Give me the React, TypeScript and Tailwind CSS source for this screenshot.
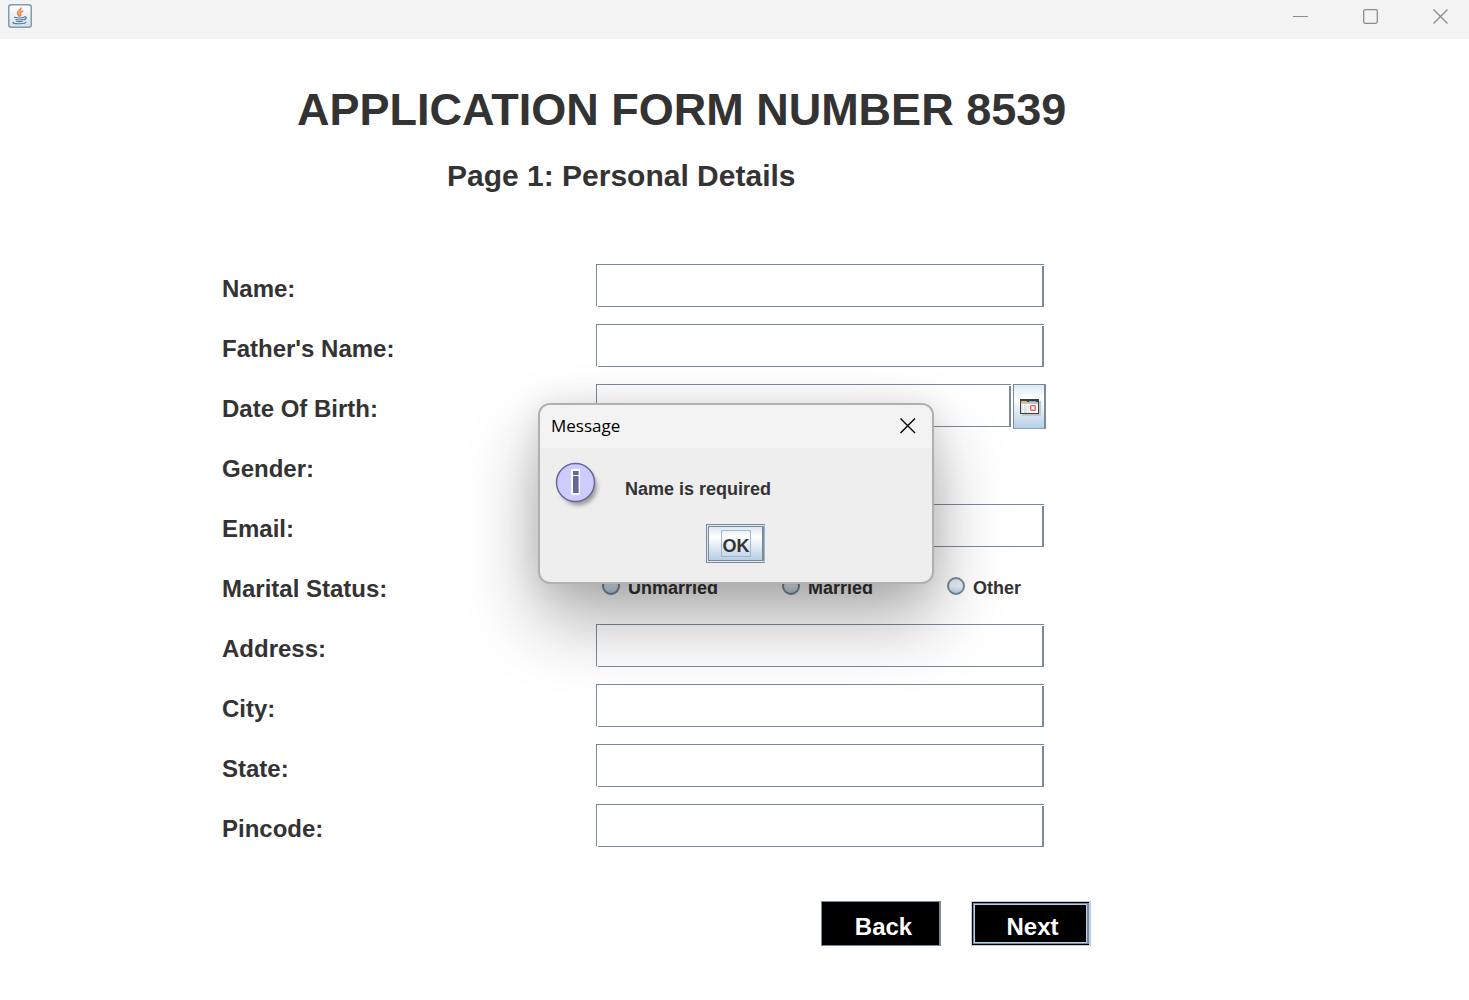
import type { ReactNode } from "react";

function JavaIcon() {
  return (
    <svg width="24" height="24" viewBox="0 0 24 24" aria-hidden="true">
      <defs>
        <linearGradient id="tile" x1="0" y1="0" x2="0" y2="1">
          <stop offset="0" stopColor="#ffffff" />
          <stop offset="1" stopColor="#d9e0e6" />
        </linearGradient>
      </defs>
      <rect x="0.75" y="0.75" width="22.5" height="22.5" rx="2.5" fill="url(#tile)" stroke="#7d9db4" strokeWidth="1.5" />
      <path d="M12.800 4.200c.8 2-3.600 3-3.300 5 .1 1 1.300 1.700 1.700 2.700M14.600 7.200c-2 .8-3 1.600-2.200 2.800.5.8.4 1.300-.2 1.900" fill="none" stroke="#e8823a" strokeWidth="1.700" strokeLinecap="round" />
      <path d="M6.500 13.200c3 .9 7 .9 9.500.1M7.700 15.300c2.300.8 5.400.8 7.300 0M8.500 17.200c2 .6 4 .6 6 0M16.500 12.900c2.500-.5 2.400 2.200-.6 2.900" fill="none" stroke="#4f7fa3" strokeWidth="1.200" strokeLinecap="round" />
      <path d="M5.500 18.200c-2 .9 1.500 1.700 6 1.600 3.500 0 6.500-.7 6.500-1.700" fill="none" stroke="#4f7fa3" strokeWidth="1.100" strokeLinecap="round" />
    </svg>
  );
}

function InfoIcon() {
  return (
    <svg width="48" height="48" viewBox="0 0 48 48" aria-hidden="true">
      <defs>
        <filter id="soft" x="-20%" y="-20%" width="150%" height="150%">
          <feGaussianBlur stdDeviation="2" />
        </filter>
      </defs>
      <circle cx="23.500" cy="25" r="18.500" fill="#000000" opacity="0.35" filter="url(#soft)" />
      <circle cx="20.500" cy="20.500" r="19" fill="#ccccff" stroke="#666699" strokeWidth="1.500" />
      <path d="M16 7h9v26h-9z" fill="#ffffff" />
      <path d="M18 9h6v4h-6zM18 14h6v17h-6z" fill="#666699" />
      <path d="M23 9h1v4h-1zM23 14h1v17h-1z" fill="#9999cc" />
    </svg>
  );
}

function CalendarIcon() {
  return (
    <svg width="21" height="17" viewBox="0 0 21 17" shapeRendering="crispEdges" aria-hidden="true">
      <path d="M2 2h19v15H2z" fill="#c3c6ca" />
      <path d="M0 0h19v15H0z" fill="#3d403c" />
      <path d="M1 2h6v1H1z" fill="#f0b040" />
      <path d="M9 2h7v1H9z" fill="#7fa6c8" />
      <path d="M1 3h17v2H1z" fill="#c4c4c4" />
      <path d="M1 5h17v9H1z" fill="#ffffff" />
      <path d="M1 6h2v8H1zM4 6h3v8H4zM8 6h1v8H8z" fill="#e3e3e3" />
      <path d="M10 6h6v6h-6z" fill="#f7b4b6" />
      <path d="M11 6h4v1h-4zM11 11h4v1h-4zM10 7h1v4h-1zM15 7h1v4h-1z" fill="#ee5c60" />
      <path d="M12 8h2v2h-2z" fill="#ffffff" />
    </svg>
  );
}

function TextField({ id, type = "text" }: { id: string; type?: string }) {
  return (
    <div className="relative min-w-0 flex-1 before:absolute before:bottom-0 before:left-0 before:h-px before:w-0.5 before:bg-[#eeeeee] after:absolute after:top-px after:right-0 after:h-px after:w-0.5 after:bg-white">
      <input
        id={id}
        type={type}
        className="block h-[43px] w-full rounded-none border border-r-2 border-[#7a8a99] bg-white px-2 text-lg outline-none"
      />
    </div>
  );
}

function Row({ label, htmlFor, children }: { label: string; htmlFor?: string; children?: ReactNode }) {
  const text = "pt-[11px] text-2xl leading-7 font-bold";
  return (
    <div className="grid h-[60px] grid-cols-[374px_minmax(0,450px)]">
      {htmlFor ? (
        <label htmlFor={htmlFor} className={text}>
          {label}
        </label>
      ) : (
        <span className={text}>{label}</span>
      )}
      <div className="flex items-start">{children}</div>
    </div>
  );
}

function Radio({ label, className }: { label: string; className: string }) {
  return (
    <label className={`flex items-start gap-2 text-lg leading-[22px] font-bold ${className}`}>
      <input
        type="radio"
        name="marital"
        className="size-[18px] appearance-none rounded-full border-2 border-[#7a8a99] bg-linear-to-b from-[#dde8f3] via-[#e9f0f6] to-[#b8cfe5]"
      />
      {label}
    </label>
  );
}

export default function App() {
  return (
    <div className="relative min-h-screen overflow-hidden bg-white font-['Liberation_Sans',Arial,sans-serif] text-[#333333]">
      <header className="flex h-[39px] items-start justify-between bg-[#f3f3f3] pt-1 pr-5 pl-2">
        <JavaIcon />
        <div className="flex gap-[54px] pt-1 text-[#8c8c8c]">
          <button type="button" aria-label="Minimize" className="size-4">
            <svg width="16" height="16" viewBox="0 0 16 16" stroke="currentColor">
              <path d="M0 8.500h15" />
            </svg>
          </button>
          <button type="button" aria-label="Maximize" className="size-4">
            <svg width="16" height="16" viewBox="0 0 16 16" fill="none" stroke="currentColor" strokeWidth="1.300">
              <rect x="0.700" y="1.700" width="13.600" height="13.600" rx="1.500" />
            </svg>
          </button>
          <button type="button" aria-label="Close" className="size-4">
            <svg width="16" height="16" viewBox="0 0 16 16" stroke="currentColor" strokeWidth="1.300">
              <path d="M0.500 1.500l14 14M14.500 1.500l-14 14" />
            </svg>
          </button>
        </div>
      </header>

      <main className="pl-[222px]">
        <h1 className="pt-[45px] pl-[75px] text-[45px] leading-[52px] font-bold whitespace-nowrap">
          APPLICATION FORM NUMBER 8539
        </h1>
        <h2 className="pt-[22px] pl-[225px] text-3xl leading-9 font-bold whitespace-nowrap">Page 1: Personal Details</h2>

        <form className="pt-[70px]">
          <div className="pr-[423px]">
            <Row label="Name:" htmlFor="name">
              <div className="flex flex-1 pr-0.5">
                <TextField id="name" />
              </div>
            </Row>
            <Row label="Father's Name:" htmlFor="father">
              <div className="flex flex-1 pr-0.5">
                <TextField id="father" />
              </div>
            </Row>
            <Row label="Date Of Birth:" htmlFor="dob">
              <div className="flex flex-1 items-start gap-0.5">
                <TextField id="dob" />
                <button
                  type="button"
                  aria-label="Choose date"
                  className="flex h-[45px] w-[33px] items-center justify-center border border-r-2 border-[#7a8a99] border-b-[#8fa3b6] bg-linear-to-b from-[#dde8f3] via-white via-30% to-[#b8cfe5] pt-0.5 pl-0.5"
                >
                  <CalendarIcon />
                </button>
              </div>
            </Row>
            <Row label="Gender:" />
            <Row label="Email:" htmlFor="email">
              <div className="flex flex-1 pr-0.5">
                <TextField id="email" type="email" />
              </div>
            </Row>
            <Row label="Marital Status:">
              <div className="flex pt-[13px] pl-1.5">
                <Radio label="Unmarried" className="w-[180px]" />
                <Radio label="Married" className="w-[165px]" />
                <Radio label="Other" className="" />
              </div>
            </Row>
            <Row label="Address:" htmlFor="address">
              <div className="flex flex-1 pr-0.5">
                <TextField id="address" />
              </div>
            </Row>
            <Row label="City:" htmlFor="city">
              <div className="flex flex-1 pr-0.5">
                <TextField id="city" />
              </div>
            </Row>
            <Row label="State:" htmlFor="state">
              <div className="flex flex-1 pr-0.5">
                <TextField id="state" />
              </div>
            </Row>
            <Row label="Pincode:" htmlFor="pincode">
              <div className="flex flex-1 pr-0.5">
                <TextField id="pincode" />
              </div>
            </Row>
          </div>

          <div className="flex gap-[30px] pt-[37px] pl-[599px] text-2xl font-bold text-white">
            <button type="button" className="h-[45px] w-[120px] border border-r-2 border-[#7a8a99] bg-black pt-1.5 pl-1.5">
              Back
            </button>
            <button type="button" className="h-[45px] w-[120px] border border-r-2 border-[#b8cfe5] bg-black py-px pl-px">
              <span className="flex h-full border border-r-2 border-[#7a8a99]">
                <span className="flex flex-1 items-center justify-center border border-[#b8cfe5] pt-1.5 pl-1">Next</span>
              </span>
            </button>
          </div>
        </form>
      </main>

      <div
        role="dialog"
        aria-labelledby="dialog-title"
        className="absolute top-[403px] left-[538px] flex h-[181px] w-[396px] flex-col overflow-hidden rounded-xl border-2 border-[#b0b0b0] bg-[#eeeeee] shadow-[0_36px_72px_rgba(0,0,0,0.32),0_2px_32px_rgba(0,0,0,0.1)]"
      >
        <div className="flex h-[43px] items-center justify-between bg-[#f3f3f3] pr-4 pb-0.5 pl-[11px] text-black">
          <h3 id="dialog-title" className="font-['Open_Sans','Noto_Sans',sans-serif] text-[17px]">
            Message
          </h3>
          <button type="button" aria-label="Close message" className="size-4">
            <svg width="16" height="16" viewBox="0 0 16 16" stroke="currentColor" strokeWidth="1.400">
              <path d="M0.500 0.500l14.500 14.500M15 0.500l-14.500 14.500" />
            </svg>
          </button>
        </div>
        <div className="flex gap-[22px] pt-3.5 pl-[15px]">
          <InfoIcon />
          <p className="pt-[15px] text-lg leading-6 font-bold">Name is required</p>
        </div>
        <button
          type="button"
          className="mt-3.5 ml-[166px] h-[39px] w-[59px] shrink-0 border border-[#7a8a99] border-r-[#a3b8cc] bg-[#dde8f3] py-px pl-px text-lg font-bold"
        >
          <span className="flex h-full items-center justify-center border border-r-2 border-[#7a8a99] bg-linear-to-b from-[#dde8f3] via-white via-30% to-[#b8cfe5]">
            <span className="h-[27px] border border-[#a3b8cc] pt-px pl-px">OK</span>
          </span>
        </button>
      </div>
    </div>
  );
}
